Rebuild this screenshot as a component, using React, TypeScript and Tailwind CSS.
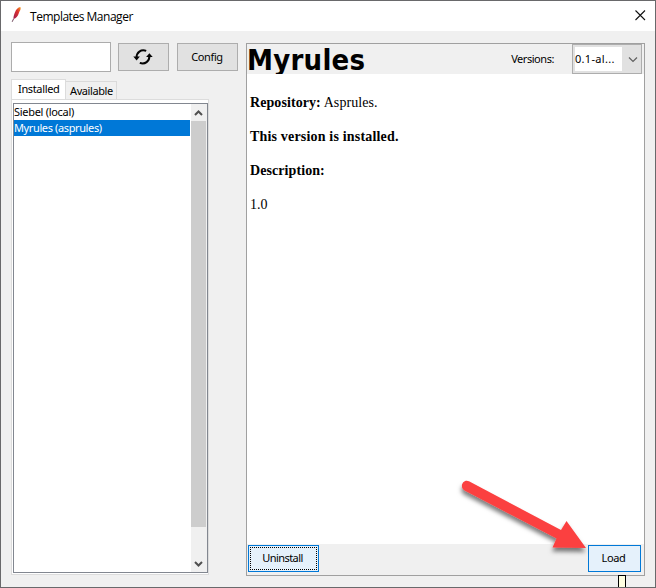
import type { ReactNode } from "react";

const ui = "font-['Noto_Sans','Open_Sans',sans-serif] text-[11px] leading-4 whitespace-nowrap";

function Chevron({ up = false }: { up?: boolean }) {
  return (
    <svg className="block" width="9" height="8" viewBox="0 0 9 8" fill="none">
      <path d={up ? "M1 6L4.5 2.5L8 6" : "M1 2L4.5 5.5L8 2"} stroke="#505050" strokeWidth="2" />
    </svg>
  );
}

function Button({ className, children }: { className: string; children: ReactNode }) {
  return (
    <button className={`flex items-center justify-center border ${ui} ${className}`}>{children}</button>
  );
}

function TitleBar() {
  return (
    <header className="flex h-[30px] shrink-0 items-center bg-white pl-2.5 pr-[9px]">
      <svg width="11" height="17" viewBox="0 0 11 17" className="mt-[-3px]">
        <defs>
          <linearGradient id="feather" x1="1" y1="0" x2="0" y2="1">
            <stop offset="0" stopColor="#f6a01e" />
            <stop offset="0.4" stopColor="#dc3030" />
            <stop offset="1" stopColor="#9a1d50" />
          </linearGradient>
        </defs>
        <path d="M9.3 1C7 1.2 5 3.7 4 6.2C3 8.7 2.3 10.7 2.5 13C5.2 12.4 6.8 10.3 7.7 7.5C8.4 5.3 10.5 3.2 9.3 1Z" fill="url(#feather)" />
        <path d="M2.6 12.8L1.2 15.8" stroke="#70485c" strokeWidth="1" />
      </svg>
      <h1 className="ml-2 mt-px font-['Open_Sans','Noto_Sans',sans-serif] text-[12px] leading-4 tracking-[-0.48px] whitespace-nowrap">
        Templates Manager
      </h1>
      <svg className="ml-auto mt-[-2px]" width="11" height="11" viewBox="0 0 11 11" fill="none" stroke="#111" strokeWidth="1.1">
        <path d="M0.5 0.5L10 10M10 0.5L0.5 10" />
      </svg>
    </header>
  );
}

function LeftPanel() {
  return (
    <aside className="flex w-[228px] shrink-0 flex-col">
      <div className="flex items-start">
        <input className="h-[30px] w-[100px] border border-[#acacac] bg-white" />
        <Button className="ml-[7px] mt-px h-7 w-[51px] border-[#adadad] bg-[#e1e1e1] pr-px">
          <svg width="20" height="18" viewBox="0 0 20 18" fill="none" stroke="#050505" strokeWidth="2">
            <path d="M3.6 9.5C3.4 4.5 8 1 13.2 2.9M16.4 8C16.6 13.2 12 16.8 6.8 14.9" />
            <path d="M0.3 8.6H6.9L3.6 12.4ZM13.1 9H19.7L16.4 5.2Z" fill="#050505" stroke="none" />
          </svg>
        </Button>
        <Button className="ml-2 mt-px h-7 w-[61px] border-[#adadad] bg-[#e1e1e1] pr-px tracking-[-0.4px]">Config</Button>
      </div>
      <div className="mt-[7px] flex h-5 items-end">
        <div className={`h-5 w-[55px] border border-b-0 border-[#dcdcdc] bg-white pl-1.5 pt-px tracking-[-0.35px] ${ui}`}>Installed</div>
        <div className={`h-[18px] w-[51px] border border-b-0 border-l-0 border-[#dadada] pl-1 pt-px tracking-[-0.4px] ${ui}`}>Available</div>
      </div>
      <div className="h-[476px] w-[198px] border border-[#dcdcdc] bg-white pl-px pt-[3px]">
        <div className="flex h-[470px] w-[195px] border border-[#828790] bg-white">
          <ul className={`w-44 ${ui}`}>
            <li className="h-4 tracking-[-0.3px]">Siebel (local)</li>
            <li className="h-4 bg-[#0078d7] tracking-[-0.38px] text-white">Myrules (asprules)</li>
          </ul>
          <div className="ml-px flex w-4 flex-col items-center bg-[#f0f0f0] pr-px">
            <div className="flex h-[17px] shrink-0 items-center"><Chevron up /></div>
            <div className="h-[406px] w-[15px] shrink-0 bg-[#cdcdcd]" />
            <div className="mt-auto flex h-[17px] items-center"><Chevron /></div>
          </div>
        </div>
      </div>
    </aside>
  );
}

function Details() {
  return (
    <main className="ml-[7px] mt-px flex h-[533px] w-[399px] flex-col border border-[#a0a0a0] bg-white">
      <div className="flex h-[30px] shrink-0 items-start bg-[#f0f0f0] pr-0.5">
        <h2 className="h-[30px] font-['DejaVu_Sans_Condensed','DejaVu_Sans',sans-serif] text-[29px] font-bold leading-[33px] tracking-[0.25px] [font-stretch:condensed]">Myrules</h2>
        <span className={`ml-auto mt-[7px] tracking-[-0.45px] ${ui}`}>Versions:</span>
        <div className="ml-[18px] flex h-[30px] w-[70px] border border-[#adadad] bg-[#e1e1e1] p-0.5">
          <div className={`w-[47px] bg-white pt-1 tracking-[0.3px] ${ui}`}>0.1-al...</div>
          <svg className="ml-1.5 mt-[9px]" width="10" height="8" viewBox="0 0 10 8" fill="none">
            <path d="M1 1.5L5 5.5L9 1.5" stroke="#606060" strokeWidth="1.2" />
          </svg>
        </div>
      </div>
      <div className="relative flex-1 bg-white pl-[3px] pt-5 font-['Liberation_Serif',serif] text-[14px] leading-[17px]">
        <p className="mb-[17px] tracking-[0.08px]"><b>Repository:</b> Asprules.</p>
        <p className="mb-[17px] tracking-[0.18px]"><b>This version is installed.</b></p>
        <p className="mb-[17px] tracking-[0.08px]"><b>Description:</b></p>
        <p>1.0</p>
      </div>
      <div className="flex h-[31px] shrink-0 justify-between bg-[#f0f0f0] pl-px pr-[3px] pt-px">
        <Button className="h-[27px] w-[71px] border-[#0078d7] bg-[#e5f1fb] p-px">
          <span className="flex h-full w-full items-center justify-center border border-dotted border-black pb-px pr-0.5 tracking-[-0.55px]">Uninstall</span>
        </Button>
        <Button className="h-[27px] w-[53px] border-[#0078d7] bg-[#e5f1fb] pb-px pr-0.5 tracking-[-0.4px]">Load</Button>
      </div>
    </main>
  );
}

export default function App() {
  return (
    <div className="relative flex h-[588px] w-[656px] flex-col overflow-hidden border border-[#69696b] bg-[#f0f0f0] text-black">
      <TitleBar />
      <div className="flex pl-2.5 pt-[11px]">
        <LeftPanel />
        <Details />
      </div>
      <svg className="absolute left-[449px] top-[469px]" width="150" height="95" viewBox="450 470 150 95">
        <defs>
          <filter id="shadow" x="-20%" y="-20%" width="140%" height="150%">
            <feDropShadow dx="-0.5" dy="4" stdDeviation="2.2" floodColor="#000" floodOpacity="0.5" />
          </filter>
        </defs>
        <path
          filter="url(#shadow)"
          fill="#fb4141"
          d="M469 481.2L561 530L566.5 521L586 548L552.5 547.5L556.5 538.5L464.5 490.5C459 487 463 478.5 469 481.2Z"
        />
      </svg>
      <div className="absolute left-[617px] top-[574px] h-4 w-2 border border-black bg-[#ffffe1]" />
    </div>
  );
}
